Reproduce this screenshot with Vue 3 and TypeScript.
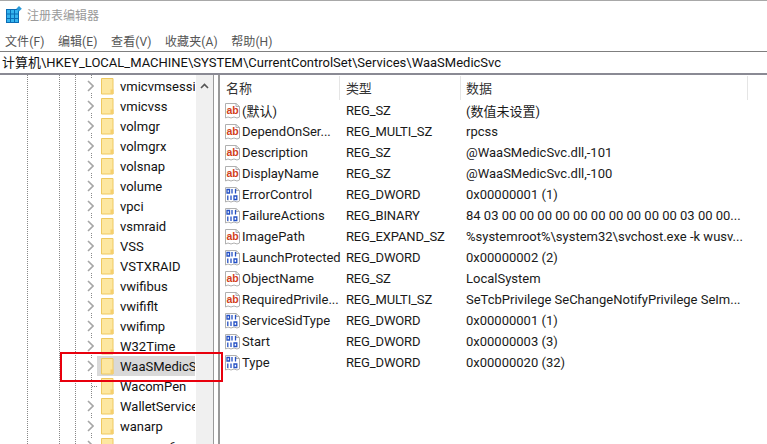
<script setup lang="ts">
const tree = ['vmicvmsessic','vmicvss','volmgr','volmgrx','volsnap','volume','vpci','vsmraid','VSS','VSTXRAID','vwifibus','vwififlt','vwifimp','W32Time','WaaSMedicS','WacomPen','WalletService','wanarp','wanarpv6']
const noArrow = ['WacomPen']
const rows = [
  ['s','(默认)','REG_SZ','(数值未设置)'],
  ['s','DependOnSer...','REG_MULTI_SZ','rpcss'],
  ['s','Description','REG_SZ','@WaaSMedicSvc.dll,-101'],
  ['s','DisplayName','REG_SZ','@WaaSMedicSvc.dll,-100'],
  ['b','ErrorControl','REG_DWORD','0x00000001 (1)'],
  ['b','FailureActions','REG_BINARY','84 03 00 00 00 00 00 00 00 00 00 00 03 00 00...'],
  ['s','ImagePath','REG_EXPAND_SZ','%systemroot%\\system32\\svchost.exe -k wusv...'],
  ['b','LaunchProtected','REG_DWORD','0x00000002 (2)'],
  ['s','ObjectName','REG_SZ','LocalSystem'],
  ['s','RequiredPrivile...','REG_MULTI_SZ','SeTcbPrivilege SeChangeNotifyPrivilege SeIm...'],
  ['b','ServiceSidType','REG_DWORD','0x00000001 (1)'],
  ['b','Start','REG_DWORD','0x00000003 (3)'],
  ['b','Type','REG_DWORD','0x00000020 (32)'],
]
</script>

<template>
  <div class="win">
    <div class="title">
      <svg class="logo" width="17" height="17" viewBox="0 0 17 17">
        <rect x="0" y="3" width="13" height="14" fill="#0a6cb5"/>
        <path d="M1 4h3v3.500H1zM5 4h3v3.500H5zM9 4h3v3.500H9zM1 8.500h3V12H1zM5 8.500h3V12H5zM9 8.500h3V12H9zM1 13h3v3H1zM5 13h3v3H5zM9 13h3v3H9z" fill="#35b4ee"/>
        <path d="M13 0l2.800 2.700L13 5.400l-2.700-2.700z" fill="#2a9ad8"/>
      </svg>
      <span>注册表编辑器</span>
    </div>
    <div class="menu">
      <span>文件(F)</span><span>编辑(E)</span><span>查看(V)</span><span>收藏夹(A)</span><span>帮助(H)</span>
    </div>
    <div class="addr">计算机\HKEY_LOCAL_MACHINE\SYSTEM\CurrentControlSet\Services\WaaSMedicSvc</div>
    <div class="body">
      <div class="tree">
        <div class="guides"><i></i><i></i><i></i><i></i></div>
        <div v-for="t in tree" :key="t" class="node" :class="{ sel: t === 'WaaSMedicS' }">
          <span class="arrow" :class="{ leaf: noArrow.includes(t) }">
            <svg v-if="!noArrow.includes(t)" width="7" height="12" viewBox="0 0 7 12"><path d="M1 1l5 5-5 5" fill="none" stroke="#a6a6a6" stroke-width="1.600"/></svg>
          </span>
          <span class="nodelabel">
            <svg class="folder" width="13" height="17" viewBox="0 0 13 17">
              <path d="M0.500 0.500h11.500v15.500H0.500z" fill="#fde7a0" stroke="#eec860"/>
              <path d="M9.500 11.500h3v4.500h-3z" fill="#f5cf6e"/>
            </svg>
            <span class="ntext">{{ t }}</span>
          </span>
        </div>
        <div class="scroll">
          <svg width="9" height="6" viewBox="0 0 9 6"><path d="M1 5l3.500-3.500L8 5" fill="none" stroke="#555" stroke-width="1.600"/></svg>
        </div>
        <div class="redbox"></div>
      </div>
      <div class="list">
        <div class="head">
          <span class="c1">名称</span><span class="c2">类型</span><span class="c3">数据</span>
          <i class="sep s1"></i><i class="sep s2"></i><i class="sep s3"></i>
        </div>
        <div v-for="r in rows" :key="r[1]" class="row">
          <span class="c1 name">
            <svg class="ico" width="17" height="18" viewBox="0 0 17 18">
              <path d="M1.500 1.500h10.500l3.500 3v10.500l-2.500 1-3-1-3 1-3-1-2.500 1z" fill="#fff" stroke="#b0b0b0"/>
              <path d="M12 1.500v3h3.500" fill="none" stroke="#b0b0b0"/>
              <template v-if="r[0] === 's'">
                <text x="2.400" y="12" class="abt">ab</text>
              </template>
              <template v-else>
                <path d="M3 3.500h2.500v3.500H3zM8 3v4.500M11.500 3v4.500M3.800 9.500v4.500M7 9.500v4.500M10 10h2.800v3.500H10z" fill="none" stroke="#2450c4" stroke-width="1.300"/>
              </template>
            </svg>
            <span>{{ r[1] }}</span>
          </span>
          <span class="c2">{{ r[2] }}</span>
          <span class="c3">{{ r[3] }}</span>
        </div>
      </div>
    </div>
  </div>
</template>

<style>
html, body { margin: 0; background: #fff; overflow: hidden; }
</style>

<style scoped>
.win { width: 767px; height: 444px; overflow: hidden; display: flex; flex-direction: column; background: #fff; color: #1a1a1a; font: 12px Roboto, "Noto Sans CJK SC", sans-serif; border-top: 1px solid #a8a8a8; box-sizing: border-box; }
.title { height: 27px; padding-bottom: 2px; box-sizing: content-box; display: flex; align-items: center; padding-left: 6px; gap: 4px; color: #9a9a9a; font-size: 12px; flex: none; }
.menu { height: 21px; display: flex; align-items: center; padding-left: 5px; gap: 13.500px; letter-spacing: 0.100px; color: #555; font-size: 12px; flex: none; }
.addr { height: 21px; line-height: 21px; border-top: 1px solid #7f7f7f; border-bottom: 2px solid #8a8a94; padding-left: 2px; font-size: 13px; flex: none; white-space: nowrap; color: #111; box-sizing: content-box; }
.body { flex: 1; display: flex; min-height: 0; overflow: hidden; position: relative; }
.tree { width: 214px; flex: none; position: relative; padding-top: 1px; box-sizing: border-box; border-right: 1px solid #9a9a9a; }
.guides i { position: absolute; top: 0; bottom: 0; width: 0; border-left: 1px dotted #888; }
.guides i:nth-child(1) { left: 27px; }
.guides i:nth-child(2) { left: 59px; }
.guides i:nth-child(3) { left: 75px; }
.guides i:nth-child(4) { left: 91px; }
.node { height: 20px; display: flex; align-items: center; padding-left: 87px; width: 196px; box-sizing: border-box; position: relative; }
.arrow { width: 10px; height: 14px; display: flex; align-items: center; flex: none; background: #fff; position: relative; }
.arrow.leaf { background: none; }
.arrow.leaf::after { content: ""; position: absolute; left: 5px; width: 5px; top: 7px; border-top: 1px dotted #888; }
.nodelabel { display: flex; align-items: center; height: 20px; width: 98px; overflow: hidden; flex: none; padding-left: 4px; box-sizing: border-box; background: #fff; }
.sel .nodelabel { background: #d9d9d9; }
.folder { flex: none; margin-right: 6px; }
.ntext { font-size: 13px; white-space: nowrap; color: #111; }
.scroll { position: absolute; top: 0; bottom: 0; left: 196px; width: 17px; background: #f0f0f0; display: flex; justify-content: center; padding-top: 8px; box-sizing: border-box; }
.scroll svg { display: block; }
.redbox { position: absolute; left: 60px; top: 277px; width: 163px; height: 30px; border: 2px solid #e8000d; box-sizing: border-box; z-index: 2; }
.list { flex: 1; padding-left: 4px; border-left: 2px solid #9a9a9a; margin-left: 4px; min-width: 0; }
.head { height: 25px; display: flex; align-items: center; color: #333; font-size: 13px; position: relative; }
.sep { position: absolute; top: 1px; height: 24px; width: 1px; background: #e5e5e5; }
.s1 { left: 115px; }
.s2 { left: 236px; }
.s3 { left: 523px; }
.head .c1 { padding-left: 2px; box-sizing: border-box; }
.row { height: 21px; display: flex; align-items: center; font-size: 13px; white-space: nowrap; }
.c1 { width: 120px; flex: none; }
.c2 { width: 120px; flex: none; padding-left: 2px; box-sizing: border-box; letter-spacing: -0.150px; }
.c3 { flex: 1; padding-left: 2px; }
.name { display: flex; align-items: center; gap: 1px; }
.ico { flex: none; }
.abt { font: bold 10.500px "Liberation Sans", sans-serif; fill: #d2401a; }
</style>
